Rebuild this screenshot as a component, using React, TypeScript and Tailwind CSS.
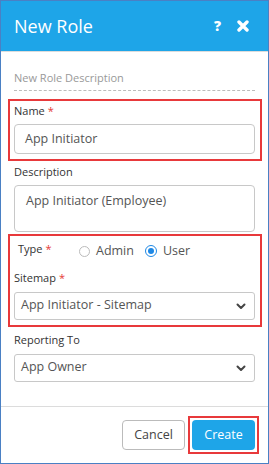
import React from 'react';

function Chevron() {
  return (
    <svg width="12" height="12" viewBox="0 0 12 12" className="shrink-0">
      <path d="M2.5 4.5 L6 8 L9.5 4.5" fill="none" stroke="#444" strokeWidth="2" strokeLinecap="round" strokeLinejoin="round" />
    </svg>
  );
}

function Label({ text, required }: { text: string; required?: boolean }) {
  return (
    <div className="text-[11px] leading-[14px] text-[#333]">
      {text}
      {required && <span className="text-[#e53935] ml-[3px]">*</span>}
    </div>
  );
}

function Select({ value }: { value: string }) {
  return (
    <div className="flex items-center justify-between h-[28px] border border-[#c8c8c8] rounded-[3px] pl-[6px] pr-[7px] text-[12.5px] text-[#555]">
      <span>{value}</span>
      <Chevron />
    </div>
  );
}

export default function App() {
  return (
    <div className="w-[269px] h-[464px] border border-[#4a80c4] bg-white flex flex-col" style={{ fontFamily: '"Open Sans", "Noto Sans", sans-serif' }}>
      <div className="h-[51px] shrink-0 bg-[#1ea5e8] flex items-center justify-between pl-[13px] pr-[19px] border-b border-[#dcdcdc]">
        <span className="text-white text-[18px] leading-none">New Role</span>
        <div className="flex items-center gap-[16px] text-white">
          <span className="text-[14px] font-extrabold leading-none">?</span>
          <svg width="12" height="12" viewBox="0 0 12 12">
            <path d="M2 2 L10 10 M10 2 L2 10" stroke="white" strokeWidth="3.4" strokeLinecap="round" />
          </svg>
        </div>
      </div>

      <div className="flex-1 px-[13px] pt-[19px]">
        <div className="text-[11px] text-[#999] leading-[14px]">New Role Description</div>
        <div className="mt-[5px] border-t border-dashed border-[#bbb]" />

        <div className="mt-[8px] -ml-[6px] -mr-[7px] border-2 border-[#e8393b] pl-[4px] pr-[5px] pt-[3px] pb-[5px]">
          <Label text="Name" required />
          <div className="mt-[6px] h-[30px] border border-[#c8c8c8] rounded-[4px] flex items-center pl-[10px] text-[12.5px] text-[#555]">
            App Initiator
          </div>
        </div>

        <div className="mt-[4px]">
          <Label text="Description" />
          <div className="mt-[6px] h-[47px] border border-[#c8c8c8] rounded-[4px] pl-[11px] pt-[6px] text-[12.5px] text-[#555] leading-[17px]">
            App Initiator (Employee)
          </div>
        </div>

        <div className="mt-[2px] -ml-[6px] -mr-[7px] border-2 border-[#e8393b] pl-[4px] pr-[5px] pt-[6px] pb-[5px]">
          <div className="flex items-center">
            <div className="w-[65px] pl-[4px] -mt-[4px]">
              <Label text="Type" required />
            </div>
            <div className="flex items-center text-[12.5px] text-[#555]">
              <span className="w-[11px] h-[11px] rounded-full border border-[#bbb] inline-block" />
              <span className="ml-[6px]">Admin</span>
              <span className="ml-[11px] w-[12px] h-[12px] rounded-full border-[1.5px] border-[#1e88e5] flex items-center justify-center">
                <span className="w-[6px] h-[6px] rounded-full bg-[#1e88e5]" />
              </span>
              <span className="ml-[6px]">User</span>
            </div>
          </div>
          <div className="mt-[10px]">
            <Label text="Sitemap" required />
          </div>
          <div className="mt-[7px]">
            <Select value="App Initiator - Sitemap" />
          </div>
        </div>

        <div className="mt-[6px]">
          <Label text="Reporting To" />
          <div className="mt-[7px]">
            <Select value="App Owner" />
          </div>
        </div>
      </div>

      <div className="border-t border-[#dcdcdc] h-[57px] shrink-0 flex items-start justify-end pr-[13px] pt-[13px] gap-[3px]">
        <button className="h-[30px] w-[63px] border border-[#bbb] rounded-[4px] bg-white text-[12.5px] text-[#444]">Cancel</button>
        <div className="border-2 border-[#e8393b] p-[2px] -mt-[4px] -mr-[4px]">
          <button className="block h-[30px] w-[63px] rounded-[4px] bg-[#1ea5e8] text-white text-[12.5px]">Create</button>
        </div>
      </div>
    </div>
  );
}
